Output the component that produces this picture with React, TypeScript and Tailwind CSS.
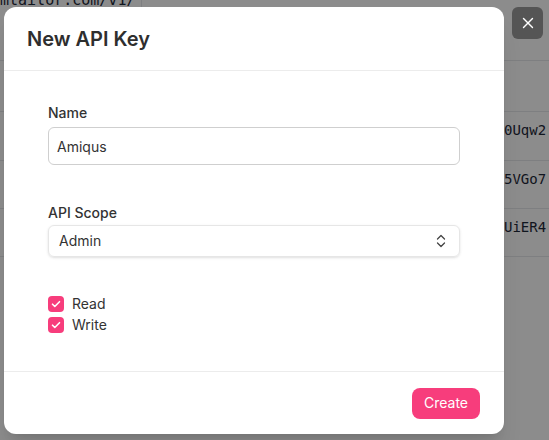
import { X } from "lucide-react"

const keyRows = [
  { suffix: "0Uqw2", h: "h-[49px]" },
  { suffix: "5VGo7", h: "h-[48px]" },
  { suffix: "UiER4", h: "h-[48px]" },
]

function CheckIcon() {
  return (
    <svg viewBox="0 0 16 16" className="h-4 w-4" fill="none">
      <path d="M4.5 8.2l2.3 2.3 4.7-4.8" stroke="white" strokeWidth="1.6" strokeLinecap="round" strokeLinejoin="round" />
    </svg>
  )
}

function Checkbox({ label }: { label: string }) {
  return (
    <label className="flex h-[21px] items-center gap-2">
      <span className="flex h-4 w-4 items-center justify-center rounded bg-[#f73d7c]">
        <CheckIcon />
      </span>
      <span className="text-sm text-[#333]">{label}</span>
    </label>
  )
}

export default function App() {
  return (
    <div className="relative h-[440px] w-[549px] overflow-hidden bg-white font-['Inter',sans-serif]">
      {/* keys table behind the dialog */}
      <div className="font-['DejaVu_Sans_Mono',monospace] text-sm text-gray-800">
        <div className="flex h-[61px] border-b border-gray-200">
          <div className="w-[142px] border-r border-gray-200">
            <div className="-mt-[10px] text-[15px] leading-5">mtailor.com/v1/</div>
          </div>
        </div>
        <div className="h-[51px] border-b border-gray-200" />
        {keyRows.map((row) => (
          <div key={row.suffix} className={`flex ${row.h} border-b border-gray-200`}>
            <div className="w-[504px] shrink-0" />
            <div className="pt-[8px] leading-5">{row.suffix}</div>
          </div>
        ))}
      </div>

      {/* backdrop */}
      <div className="absolute inset-0 bg-black/45" />

      {/* dialog */}
      <div className="absolute left-[4px] top-[7px] flex h-[427px] w-[500px] flex-col rounded-xl bg-white shadow-xl">
        <div className="flex h-[64px] items-center border-b border-[#ececec] px-[23px]">
          <h2 className="text-xl font-semibold text-[#2e2e2e]">New API Key</h2>
        </div>

        <div className="flex flex-1 flex-col px-[44px] pt-[32px]">
          <label className="mb-1 text-sm font-medium leading-5 text-[#333]">Name</label>
          <input
            defaultValue="Amiqus"
            className="h-[38px] rounded-md border border-[#cfcfcf] px-2 text-sm text-[#333] outline-none"
          />

          <label className="mb-[2px] mt-[38px] text-sm font-medium leading-5 text-[#333]">API Scope</label>
          <div className="flex h-[32px] items-center justify-between rounded-md border border-[#e6e6e6] pl-[10px] pr-[13px] shadow-sm">
            <span className="text-sm text-[#333]">Admin</span>
            <svg viewBox="0 0 10 14" className="h-[14px] w-[10px]" fill="none">
              <path d="M1.5 5L5 1.5 8.5 5M1.5 9L5 12.5 8.5 9" stroke="#444" strokeWidth="1.3" strokeLinecap="round" strokeLinejoin="round" />
            </svg>
          </div>

          <div className="mt-[36px] flex flex-col">
            <Checkbox label="Read" />
            <Checkbox label="Write" />
          </div>
        </div>

        <div className="flex h-[63px] items-center justify-end border-t border-[#ececec] px-6">
          <button className="h-[31px] rounded-lg bg-[#f73d7c] px-3 text-sm text-white">Create</button>
        </div>
      </div>

      <button className="absolute left-[512px] top-[7px] flex h-[32px] w-[31px] items-center justify-center rounded-md bg-[#555]">
        <X size={18} strokeWidth={1.8} className="text-white" />
      </button>
    </div>
  )
}
